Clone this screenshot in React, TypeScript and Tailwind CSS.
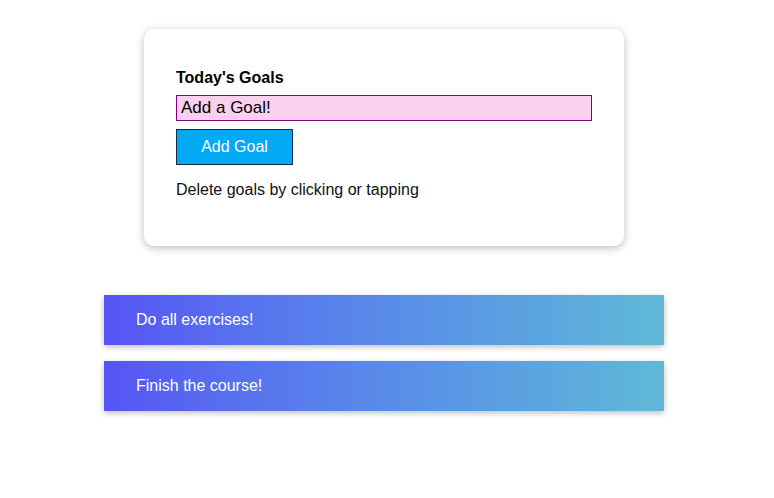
import React from 'react';

const initialGoals = ['Do all exercises!', 'Finish the course!'];

const App = () => {
  const [goals, setGoals] = React.useState<string[]>(initialGoals);
  const [text, setText] = React.useState('Add a Goal!');

  const addGoal = () => {
    if (!text.trim()) return;
    setGoals((prev) => [...prev, text]);
  };

  const removeGoal = (index: number) => {
    setGoals((prev) => prev.filter((_, i) => i !== index));
  };

  return (
    <div className="min-h-[498px] w-full bg-white font-['Liberation_Sans',Arial,sans-serif] pt-[29px]">
      <section className="w-[480px] rounded-[10px] bg-white px-8 pt-[40px] pb-[47px] shadow-[0_2px_8px_rgba(0,0,0,0.26)] ml-[144px]">
        <label className="block text-[16px] font-bold leading-[18px] text-black">Today's Goals</label>
        <input
          value={text}
          onChange={(e) => setText(e.target.value)}
          className="mt-[8px] block h-[26px] w-[416px] border border-[#800080] bg-[#fbd0ec] px-1 text-[17px] text-black outline-none"
        />
        <button
          onClick={addGoal}
          className="mt-[8px] block h-[36px] w-[117px] border border-[#0f2f44] bg-[#03a9f4] text-[16px] text-white"
        >
          Add Goal
        </button>
        <p className="mt-[16px] text-[16px] leading-[18px] text-[#111]">Delete goals by clicking or tapping</p>
      </section>

      <ul className="ml-[104px] mt-[49px] flex w-[560px] flex-col gap-4">
        {goals.map((goal, index) => (
          <li
            key={index}
            onClick={() => removeGoal(index)}
            className="flex h-[50px] cursor-pointer items-center bg-gradient-to-r from-[#5753f5] to-[#60b9d7] px-8 text-[16px] text-white shadow-[0_2px_6px_rgba(0,0,0,0.26)]"
          >
            {goal}
          </li>
        ))}
      </ul>
    </div>
  );
};

export default App;
